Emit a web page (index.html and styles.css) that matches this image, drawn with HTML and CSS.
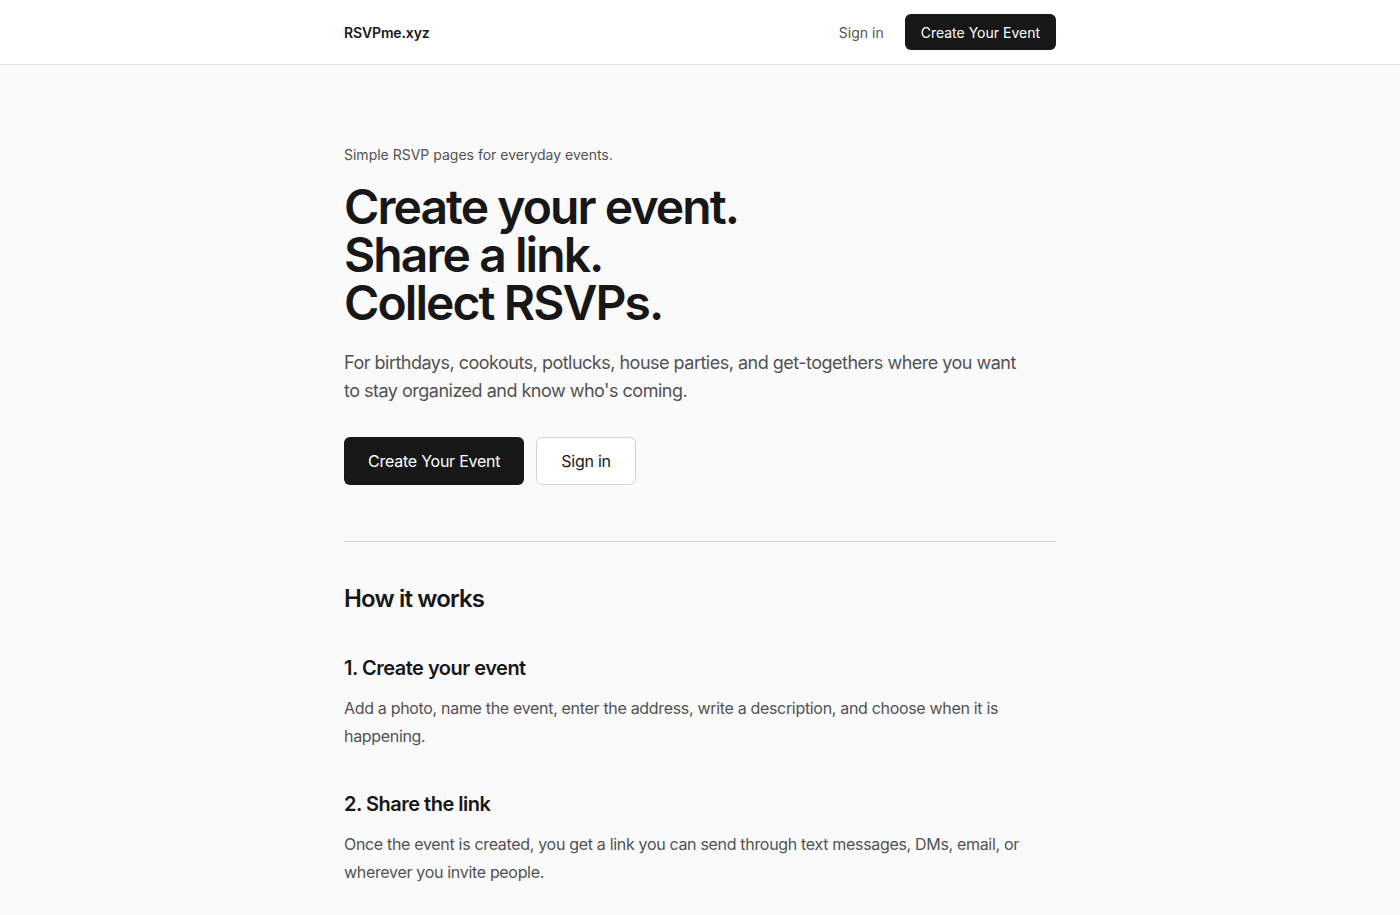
FILE: index.html
```html
<!DOCTYPE html>
<html lang="en">
<head>
    <meta charset="UTF-8">
    <meta name="viewport" content="width=device-width, initial-scale=1.0">
    <title>RSVPme.xyz</title>
    <link rel="stylesheet" href="styles.css">
</head>
<body>
    <header class="topbar">
        <div class="wrap topbar-inner">
            <a href="#" class="logo">RSVPme.xyz</a>
            <nav class="nav">
                <a href="#" class="nav-link">Sign in</a>
                <a href="#" class="btn btn-dark btn-small">Create Your Event</a>
            </nav>
        </div>
    </header>

    <main class="wrap">
        <section class="hero">
            <p class="tagline">Simple RSVP pages for everyday events.</p>
            <h1 class="hero-title">Create your event.<br>Share a link.<br>Collect RSVPs.</h1>
            <p class="lead">For birthdays, cookouts, potlucks, house parties, and get-togethers where you want to stay organized and know who's coming.</p>
            <div class="actions">
                <a href="#" class="btn btn-dark">Create Your Event</a>
                <a href="#" class="btn btn-light">Sign in</a>
            </div>
        </section>

        <section class="how">
            <h2 class="how-title">How it works</h2>

            <div class="step">
                <h3 class="step-title">1. Create your event</h3>
                <p class="step-text">Add a photo, name the event, enter the address, write a description, and choose when it is happening.</p>
            </div>

            <div class="step">
                <h3 class="step-title">2. Share the link</h3>
                <p class="step-text">Once the event is created, you get a link you can send through text messages, DMs, email, or wherever you invite people.</p>
            </div>

            <div class="step">
                <h3 class="step-title">3. Collect RSVPs</h3>
                <p class="step-text">Guests tell you if they're coming, and you can see everyone who responded in one place.</p>
            </div>
        </section>
    </main>
</body>
</html>
```

FILE: styles.css
```css
*{
    box-sizing: border-box;
}
body{
    margin: 0;
    background-color: #fafafa;
    color: #171717;
    font-family: Inter, "Noto Sans", sans-serif;
}
a{
    text-decoration: none;
    color: inherit;
}
.wrap{
    width: 712px;
    margin: 0 auto;
}
.topbar{
    background-color: #ffffff;
    border-bottom: 1px solid #e5e5e5;
}
.topbar-inner{
    height: 64px;
    display: flex;
    justify-content: space-between;
    align-items: center;
}
.logo{
    font-size: 14px;
    font-weight: 600;
    letter-spacing: -0.01em;
    color: #171717;
}
.nav{
    display: flex;
    align-items: center;
    gap: 21px;
}
.nav-link{
    font-size: 14px;
    color: #525252;
}
.btn{
    display: inline-flex;
    align-items: center;
    justify-content: center;
    height: 48px;
    padding: 0 24px;
    font-size: 16px;
    letter-spacing: -0.015em;
    border-radius: 6px;
}
.btn-small{
    height: 36px;
    padding: 0 16px;
    font-size: 14px;
    letter-spacing: 0;
}
.btn-dark{
    background-color: #171717;
    color: #ffffff;
}
.btn-light{
    background-color: #ffffff;
    color: #171717;
    border: 1px solid #d4d4d4;
}
.hero{
    padding-top: 80px;
    padding-bottom: 56px;
    border-bottom: 1px solid #d4d4d4;
}
.tagline{
    margin: 0;
    font-size: 14px;
    line-height: 20px;
    color: #525252;
}
.hero-title{
    margin: 18px 0 0;
    font-size: 48px;
    line-height: 48px;
    font-weight: 600;
    letter-spacing: -0.04em;
}
.lead{
    margin: 22px 0 0;
    max-width: 680px;
    font-size: 18px;
    line-height: 28px;
    letter-spacing: -0.028em;
    color: #525252;
}
.actions{
    display: flex;
    gap: 12px;
    margin-top: 32px;
}
.how{
    padding-top: 41px;
    padding-bottom: 60px;
}
.how-title{
    margin: 0;
    font-size: 24px;
    line-height: 32px;
    font-weight: 600;
    letter-spacing: -0.035em;
}
.step{
    margin-top: 39px;
}
.step + .step{
    margin-top: 40px;
}
.step-title{
    margin: 0;
    font-size: 20px;
    line-height: 28px;
    font-weight: 600;
    letter-spacing: -0.025em;
}
.step-text{
    margin: 12px 0 0;
    font-size: 16px;
    line-height: 28px;
    letter-spacing: -0.02em;
    color: #525252;
}
```
